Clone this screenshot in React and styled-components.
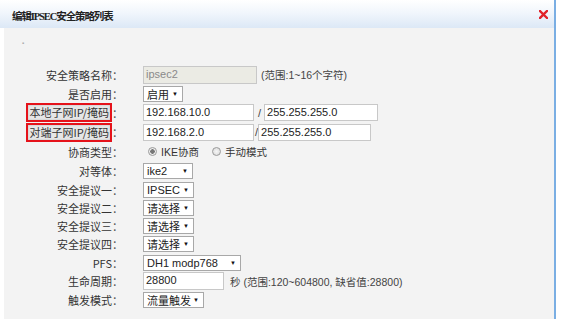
import React from "react";
import styled, { createGlobalStyle } from "styled-components";

const Global = createGlobalStyle`
  html, body { margin: 0; padding: 0; background: #ffffff; }
  body { font-family: "Liberation Sans", "Noto Sans CJK SC", sans-serif; }
`;

const Panel = styled.div`
  width: 550px;
  margin-left: 4px;
  border-right: 2px solid #7aaee3;
  background: #f3f3f3;
  padding-bottom: 10px;
`;

const Header = styled.div`
  height: 28px;
  margin-left: -4px;
  padding: 0 6px 0 12px;
  display: flex;
  align-items: center;
  justify-content: space-between;
  background: linear-gradient(#ffffff, #f1f6fc 45%, #dce8f6);
`;

const Title = styled.div`
  font-family: "Liberation Serif", "Noto Sans CJK SC", serif;
  font-weight: bold;
  font-size: 10.5px;
  letter-spacing: -1.1px;
  color: #222;
  padding-top: 2px;
`;

const Mark = styled.div`
  height: 37px;
  padding: 12px 0 0 18px;
  box-sizing: border-box;
  font-size: 6px;
  color: #aaa;
`;

const Form = styled.div`
  display: flex;
  flex-direction: column;
`;

const Row = styled.div`
  display: flex;
  align-items: center;
  height: ${(p) => p.$h}px;
`;

const Label = styled.div`
  width: 119px;
  display: flex;
  justify-content: flex-end;
  align-items: center;
  font-family: "Noto Sans CJK SC", sans-serif;
  font-size: 11px;
  color: #333;
  white-space: nowrap;
  margin-right: 20px;
`;

const Colon = styled.span`
  width: 11px;
  text-align: center;
  color: #555;
`;

const Highlight = styled.span`
  border: 2px solid #e5121a;
  padding: 0 1px 0 1px;
  background: #e6e6e6;
  height: 15px;
  line-height: 15px;
  box-shadow: inset 0 0 2px #bbb;
`;

const Field = styled.div`
  display: flex;
  align-items: center;
  font-size: 11px;
  color: #333;
`;

const Input = styled.div`
  box-sizing: border-box;
  width: ${(p) => p.$w}px;
  height: ${(p) => p.$ht || 17}px;
  border: 1px solid #c8c8c8;
  background: ${(p) => (p.$disabled ? "#ebebe4" : "#ffffff")};
  color: ${(p) => (p.$disabled ? "#8a8a8a" : "#222")};
  font-family: "Liberation Sans", "Noto Sans CJK SC", sans-serif;
  font-size: 11px;
  line-height: 15px;
  padding-left: 2px;
`;

const Slash = styled.span`
  font-size: 11px;
  color: #444;
  margin: 0 ${(p) => p.$r}px 0 ${(p) => p.$l}px;
`;

const Note = styled.span`
  font-family: "Liberation Sans", "Noto Sans CJK SC", sans-serif;
  font-size: 10.5px;
  color: #444;
  margin-left: ${(p) => p.$ml || 4}px;
`;

const Select = styled.div`
  box-sizing: border-box;
  width: ${(p) => p.$w}px;
  height: 16px;
  border: 1px solid #a8a8a8;
  background: #ffffff;
  display: flex;
  align-items: center;
  justify-content: space-between;
  padding: 0 4px 0 3px;
  font-family: "Liberation Sans", "Noto Sans CJK SC", sans-serif;
  font-size: 11px;
  color: #222;
`;

const Arrow = styled.span`
  font-size: 6px;
  color: #111;
`;

const Radio = styled.span`
  box-sizing: border-box;
  width: 9px;
  height: 9px;
  border-radius: 50%;
  border: 1px solid #9a9a9a;
  background: radial-gradient(circle, ${(p) => (p.$on ? "#777 0 2px, #eee 2.5px" : "#f5f5f5 0, #ddd 4px")});
  margin: 0 4px 0 ${(p) => p.$ml}px;
`;

const RadioText = styled.span`
  font-family: "Liberation Sans", "Noto Sans CJK SC", sans-serif;
  font-size: 10.5px;
  color: #333;
`;

const Close = () => (
  <svg width="9" height="9" viewBox="0 0 9 9">
    <path d="M1 1 L8 8 M8 1 L1 8" stroke="#e0232a" strokeWidth="2.4" strokeLinecap="square" />
  </svg>
);

const Sel = ({ w, children }) => (
  <Select $w={w}>
    <span>{children}</span>
    <Arrow>▼</Arrow>
  </Select>
);

export default function App() {
  return (
    <>
      <Global />
      <Panel>
        <Header>
          <Title>编辑IPSEC安全策略列表</Title>
          <Close />
        </Header>
        <Mark>▪</Mark>
        <Form>
          <Row $h={19}>
            <Label>安全策略名称<Colon>：</Colon></Label>
            <Field>
              <Input $w={114} $ht={18} $disabled>ipsec2</Input>
              <Note>(范围:1~16个字符)</Note>
            </Field>
          </Row>
          <Row $h={19}>
            <Label>是否启用<Colon>：</Colon></Label>
            <Field><Sel w={40}>启用</Sel></Field>
          </Row>
          <Row $h={19}>
            <Label><Highlight>本地子网IP/掩码</Highlight><Colon>：</Colon></Label>
            <Field>
              <Input $w={111}>192.168.10.0</Input>
              <Slash $l={4} $r={3}>/</Slash>
              <Input $w={114}>255.255.255.0</Input>
            </Field>
          </Row>
          <Row $h={20}>
            <Label><Highlight>对端子网IP/掩码</Highlight><Colon>：</Colon></Label>
            <Field>
              <Input $w={111}>192.168.2.0</Input>
              <Slash $l={1} $r={0}>/</Slash>
              <Input $w={113}>255.255.255.0</Input>
            </Field>
          </Row>
          <Row $h={19}>
            <Label>协商类型<Colon>：</Colon></Label>
            <Field>
              <Radio $ml={5} $on />
              <RadioText>IKE协商</RadioText>
              <Radio $ml={13} />
              <RadioText>手动模式</RadioText>
            </Field>
          </Row>
          <Row $h={19}>
            <Label>对等体<Colon>：</Colon></Label>
            <Field><Sel w={50}>ike2</Sel></Field>
          </Row>
          <Row $h={19}>
            <Label>安全提议一<Colon>：</Colon></Label>
            <Field><Sel w={51}>IPSEC</Sel></Field>
          </Row>
          <Row $h={18}>
            <Label>安全提议二<Colon>：</Colon></Label>
            <Field><Sel w={51}>请选择</Sel></Field>
          </Row>
          <Row $h={18}>
            <Label>安全提议三<Colon>：</Colon></Label>
            <Field><Sel w={51}>请选择</Sel></Field>
          </Row>
          <Row $h={18}>
            <Label>安全提议四<Colon>：</Colon></Label>
            <Field><Sel w={51}>请选择</Sel></Field>
          </Row>
          <Row $h={19}>
            <Label>PFS<Colon>：</Colon></Label>
            <Field><Sel w={98}>DH1 modp768</Sel></Field>
          </Row>
          <Row $h={18}>
            <Label>生命周期<Colon>：</Colon></Label>
            <Field>
              <Input $w={81} $ht={18}>28800</Input>
              <Note $ml={6}>秒 (范围:120~604800, 缺省值:28800)</Note>
            </Field>
          </Row>
          <Row $h={19}>
            <Label>触发模式<Colon>：</Colon></Label>
            <Field><Sel w={61}>流量触发</Sel></Field>
          </Row>
        </Form>
      </Panel>
    </>
  );
}
